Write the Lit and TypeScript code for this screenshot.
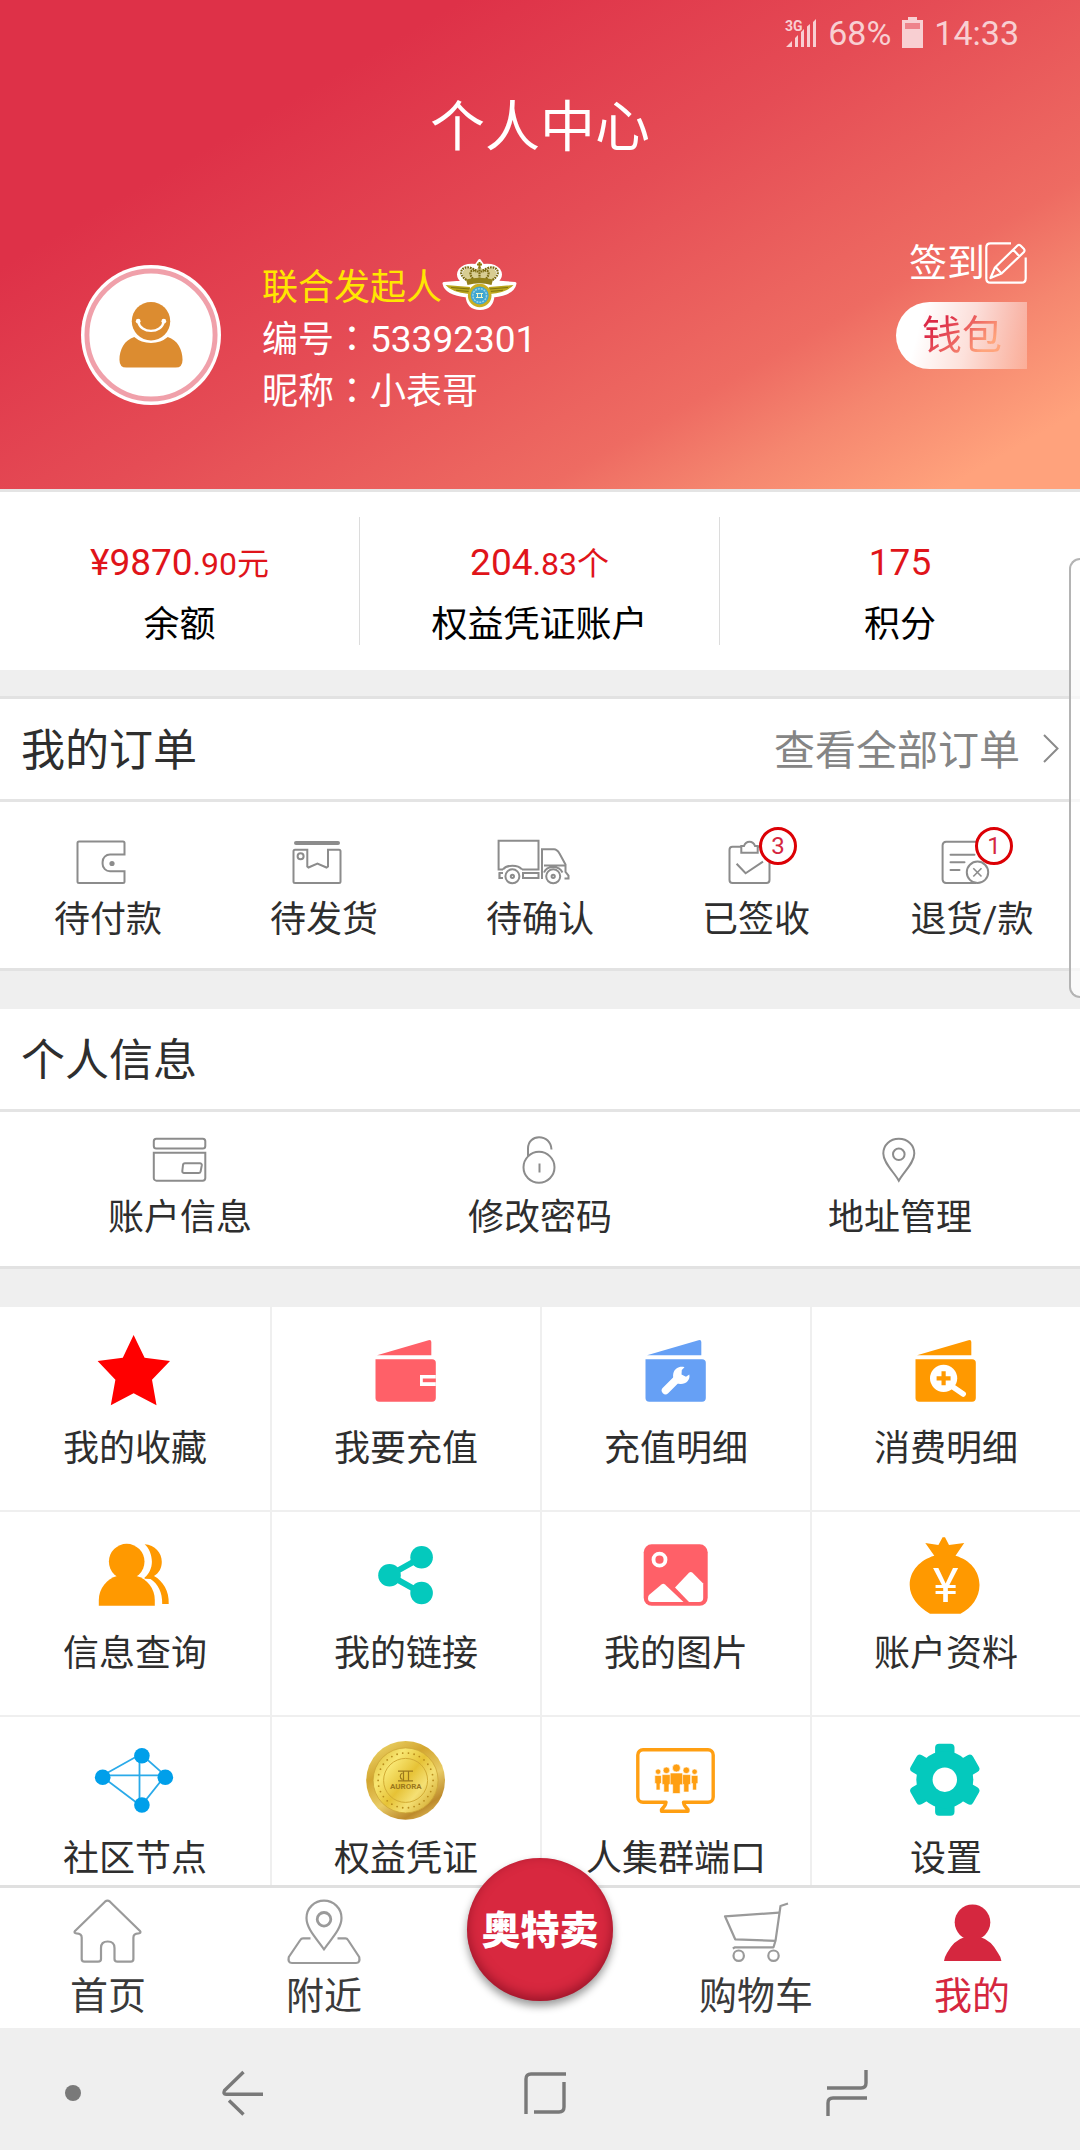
import { LitElement, html, svg, css, nothing, type TemplateResult } from "lit";
import { customElement, property, state } from "lit/decorators.js";
import { classMap } from "lit/directives/class-map.js";

const sharedStyles = css`
  * {
    box-sizing: border-box;
  }
  a,
  button {
    font: inherit;
    color: inherit;
    text-decoration: none;
    background: none;
    border: 0;
    padding: 0;
    margin: 0;
    cursor: pointer;
  }
  svg {
    display: block;
    overflow: visible;
  }
`;

/* ---------- line icons for orders and personal info (80 x 48) ---------- */

const lineIcons: Record<string, TemplateResult> = {
  pay: svg`
    <path d="M56.5 16.5V5a1.5 1.5 0 0 0-1.5-1.500H11A1.500 1.500 0 0 0 9.500 5v38.500A1.500 1.500 0 0 0 11 45h44a1.500 1.500 0 0 0 1.500-1.500V33.300H42a7.400 7.400 0 0 1-7.400-7.400v-2A7.400 7.400 0 0 1 42 16.500Z"/>
    <circle cx="44" cy="25.500" r="2.600" fill="#8c8c8c" stroke="none"/>`,
  ship: svg`
    <path d="M12 5H54" stroke-width="4" stroke-linecap="round"/>
    <path d="M11 11.700H23.300V28.500L24.500 29.500L33.400 25.500L42.500 29.500L44 28.500V11.700H55a1.500 1.500 0 0 1 1.500 1.500V43.500A1.500 1.500 0 0 1 55 45H11A1.500 1.500 0 0 1 9.500 43.500V13.200A1.500 1.500 0 0 1 11 11.700Z"/>
    <circle cx="16.600" cy="18.300" r="3"/>`,
  confirm: svg`
    <path d="M3 31.500H-1.400V2.800H38.500V31.500H22"/>
    <path d="M3 31.500C6.500 26.500 18 26.500 22 31.500"/>
    <path d="M-1.400 35H3M-1.400 40H3M-0.500 34.500V41" stroke-width="2.200"/>
    <rect x="23" y="35" width="15.500" height="5"/>
    <path d="M42 41V11.300H54C57 11.300 58 13 59.500 15.500L65.500 26.500V34L68.500 37.500V40.500H64.500"/>
    <path d="M44 27.500H65.500M44 34.500C47 27 59 27 62.500 34.500"/>
    <circle cx="12.400" cy="38.300" r="7"/>
    <circle cx="12.400" cy="38.300" r="1.600"/>
    <circle cx="53.200" cy="38.300" r="7"/>
    <circle cx="53.200" cy="38.300" r="1.600"/>`,
  signed: svg`
    <path d="M25 8.700H16.500A3 3 0 0 0 13.500 11.700V42A3 3 0 0 0 16.500 45H50.500A3 3 0 0 0 53.500 42V11.700A3 3 0 0 0 50.500 8.700H42"/>
    <path d="M25.300 14.800V8H28C30 2.200 37 2.200 39 8H41.700V14.800Z"/>
    <path d="M20.600 25.700L29.600 35.300L47 23.700"/>`,
  refund: svg`
    <path d="M50 22V6.700A3 3 0 0 0 47 3.700H14A3.500 3.500 0 0 0 10.600 7.200V41.500A3.500 3.500 0 0 0 14 45H44"/>
    <path d="M18.500 16.700H42.500M18.500 24.300H32.500M18.500 32H27.500" stroke-linecap="round"/>
    <circle cx="45.500" cy="34.300" r="10.700" fill="#fff"/>
    <path d="M41.300 30.300L49.500 38.500M49.500 30.300L41.300 38.500" stroke-width="1.600"/>`,
  account: svg`
    <rect x="13.800" y="2.800" width="51.500" height="9.800" rx="2.500"/>
    <path d="M13.800 16.800H65.300V42A2.700 2.700 0 0 1 62.600 44.700H16.500A2.700 2.700 0 0 1 13.800 42Z"/>
    <path d="M45 27.200H60A1.800 1.800 0 0 1 61.800 29.200L60.600 35.500A2 2 0 0 1 58.600 37H44A1.800 1.800 0 0 1 42.300 35L43 29A2 2 0 0 1 45 27.200Z"/>`,
  password: svg`
    <circle cx="39" cy="31.300" r="15.500"/>
    <path d="M28 20.500V12.500C28 5.500 33.200 1.300 39 1.300C46 1.300 51 6 51.500 13.500"/>
    <path d="M39.500 27.500V36.500"/>`,
  address: svg`
    <path d="M38.800 44.700C34 36 23.300 27 23.300 17.500C23.300 9 30 2.800 38.800 2.800S54.300 9 54.300 17.500C54.300 27 43.500 36 38.800 44.700Z"/>
    <circle cx="38.800" cy="18.300" r="5.800"/>`,
};

/* ---------- coloured service icons (80 x 80) ---------- */

const folder = (color: string) => svg`
  <path d="M11 24.300L62.500 9.200Q65.300 8.500 65.300 11V24.300Z" fill=${color}/>
  <path d="M9.500 28.300H66Q69.800 28.300 69.800 32V67Q69.800 70.700 66 70.700H13.300Q9.500 70.700 9.500 67Z" fill=${color}/>`;

const coinDots = Array.from({ length: 30 }, (_, i) => {
  const a = (i * Math.PI) / 15;
  return svg`<circle cx=${39.6 + 27.5 * Math.cos(a)} cy=${39.4 + 27.5 * Math.sin(a)} r="0.9" fill="#b98c1c"/>`;
});

const crowd = [
  { x: 22.1, y: 30.7, r: 2.7, w: 6.6, b: 49 },
  { x: 58.6, y: 30.7, r: 2.7, w: 6.6, b: 49 },
  { x: 30.4, y: 29.3, r: 3.3, w: 8.6, b: 51 },
  { x: 50.3, y: 29.3, r: 3.3, w: 8.6, b: 51 },
  { x: 40.4, y: 27, r: 4, w: 12.4, b: 52.5 },
];

const serviceIcons: Record<string, TemplateResult> = {
  favorite: svg`<path fill="#ff0000" d="M38.600 4L49.600 26.700L75 30L57 48.700L61.500 74.300L38.600 62.300L15.800 74.300L20.400 48.700L2.600 30L27.800 26.700Z"/>`,
  recharge: svg`
    ${folder("#ff6068")}
    <path d="M69.800 44H54V55H69.800" fill="#fff"/>
    <rect x="56.800" y="47.500" width="13" height="3.700" fill="#ff6068"/>`,
  rechargeLog: svg`
    ${folder("#66a0f5")}
    <path d="M29.500 59.500L42 47" stroke="#fff" stroke-width="7.500" stroke-linecap="round"/>
    <path fill="#fff" d="M48.500 36.200C44 34.800 38.500 37 37.300 42.500C36.200 48 39 52.600 44.500 53C50 53.200 54.500 49 53.300 43.500L50 45.800L45.500 43.500L45.800 39Z"/>`,
  spendLog: svg`
    ${folder("#ff9900")}
    <circle cx="37.600" cy="47.300" r="13.600" fill="#fff"/>
    <path d="M47 56L57.200 63" stroke="#fff" stroke-width="5.500" stroke-linecap="round"/>
    <path d="M37.600 40.300V54.300M30.600 47.300H44.600" stroke="#ff9900" stroke-width="4.200"/>`,
  inquiry: svg`
    <g fill="#ff9900">
      <circle cx="31.700" cy="25.600" r="17.800"/>
      <path d="M3.800 69.700V64C3.800 52.500 12 42.500 22 40H41.500C52 42.500 59.800 52.500 59.800 64V69.700Z"/>
      <path d="M49.600 8.300C60 9 66.800 17 66.800 25.700C66.800 32 64 37 59 40C68 45 74.300 55 73.700 68H67.200C67.500 56 63 48 55.500 43L49.600 42.700V41.500C54 38 56.900 32 56.900 25.700C56.900 19 54 12 49.600 8.300Z"/>
    </g>`,
  link: svg`
    <g fill="#04c9bd">
      <path d="M55.500 21.300L23.500 39.200L55.500 57.200" fill="none" stroke="#04c9bd" stroke-width="6"/>
      <circle cx="23.500" cy="39.200" r="11.300"/>
      <circle cx="55.600" cy="21.300" r="11.300"/>
      <circle cx="55.600" cy="57" r="11.300"/>
    </g>`,
  picture: svg`
    <rect x="7.700" y="8.300" width="64" height="61.500" rx="8" fill="#ff6068"/>
    <circle cx="23.500" cy="23.700" r="6" fill="none" stroke="#fff" stroke-width="3.800"/>
    <path fill="#fff" d="M13 59L25.500 48.500Q27.300 47 29 48.500L47.500 66H16Q12 66 12 62.500Q12 60 13 59Z"/>
    <path fill="#fff" d="M39 51.500L53 36.800Q54.800 35.200 56.500 36.800L67.200 47.500V62Q67.200 66 63 66H53Z"/>`,
  profile: svg`
    <path fill="#ff9900" d="M19.300 7L32.400 9L36.600 1.300H39L43 9L58.200 7L49.500 19.800C64 24 73.500 35 73.500 49C73.500 61 66 72 54.500 77.700H24C12 71 3.700 61 3.700 49C3.700 35 14 24 28.300 19.800Z"/>
    <text x="39.500" y="66" text-anchor="middle" font-family="Roboto, sans-serif" font-size="49" fill="#fff">¥</text>`,
  nodes: svg`
    <path d="M7.600 34.300H70.300M44.500 14.700V64M7.600 34.500L46 13L70.300 34.500L46 65L7.600 36" fill="none" stroke="#2aaae9" stroke-width="1.800"/>
    <g fill="#009fea">
      <circle cx="7.700" cy="36.300" r="7.800"/>
      <circle cx="46.900" cy="14.700" r="7.800"/>
      <circle cx="70.300" cy="36.300" r="7.800"/>
      <circle cx="46.900" cy="64" r="7.800"/>
    </g>`,
  voucher: svg`
    <defs>
      <linearGradient id="rim" x1="0.200" y1="0" x2="0.800" y2="1">
        <stop offset="0" stop-color="#ecd468"/><stop offset="0.300" stop-color="#d3a630"/>
        <stop offset="0.600" stop-color="#e9cc66"/><stop offset="0.850" stop-color="#bd8a2c"/>
        <stop offset="1" stop-color="#e2bf5c"/>
      </linearGradient>
      <linearGradient id="face" x1="0" y1="0" x2="1" y2="0.800">
        <stop offset="0" stop-color="#d9b228"/><stop offset="0.300" stop-color="#f8e672"/>
        <stop offset="0.550" stop-color="#e6c236"/><stop offset="0.750" stop-color="#f5e074"/>
        <stop offset="1" stop-color="#d3aa32"/>
      </linearGradient>
    </defs>
    <circle cx="39.600" cy="39.400" r="39.400" fill="url(#rim)"/>
    <circle cx="39.600" cy="39.400" r="32.500" fill="url(#face)" stroke="#cda636" stroke-width="0.800"/>
    ${coinDots}
    <circle cx="39.600" cy="39.400" r="22" fill="none" stroke="#d2ab34" stroke-width="1"/>
    <path d="M32 30.200H47M32 39.800H47M36.500 32C33.500 33 33.500 37.500 36.500 38.500M42.500 30.500V39.500M37.500 30.500V39.500" fill="none" stroke="#9c781c" stroke-width="1.200"/>
    <text x="39.800" y="48" text-anchor="middle" font-family="Roboto, sans-serif" font-size="8" font-weight="700" fill="#9c781c">AURORA</text>`,
  crowd: svg`
    <path d="M30 61.300H7A5.200 5.200 0 0 1 1.800 56.100V14A5.200 5.200 0 0 1 7 8.800H72A5.200 5.200 0 0 1 77.200 14V56.100A5.200 5.200 0 0 1 72 61.300H47.500Q48 65 52 68.500V70.300H25.500V68.500Q29.500 65 30 61.300Z" fill="none" stroke="#ff9f12" stroke-width="3.400" stroke-linejoin="round"/>
    ${crowd.map(
      (p) => svg`
        <g fill="#ff9f12" stroke="#fff" stroke-width="0.600">
          <path d=${`M${p.x - p.w / 2} ${p.y + p.r + 1}h${p.w}v${(p.b - p.y) / 2 - 1}h-${p.w / 5}V${p.b}h-${p.w * 0.6}V${(p.b + p.y) / 2 + p.r}h-${p.w / 5}Z`}/>
          <circle cx=${p.x} cy=${p.y} r=${p.r}/>
        </g>`,
    )}`,
  settings: svg`
    <g fill="#04c9bd">
      ${[0, 60, 120].map((a) => svg`<rect x="29.100" y="2.700" width="19.400" height="72" rx="4" transform=${`rotate(${a} 38.8 38.7)`}/>`)}
      <circle cx="38.800" cy="38.700" r="28.500"/>
    </g>
    <circle cx="38.800" cy="38.700" r="12.200" fill="#fff"/>`,
};

/* ---------- tab bar icons (80 x 72) ---------- */

const tabIcons: Record<string, TemplateResult> = {
  home: svg`<path d="M37 5.700Q39.500 3.500 42 5.700L72 35Q73.500 37 70.500 37.300Q65.400 37.500 65.400 41.500V63Q65.400 65.700 62.700 65.700H49.500Q46.500 65.700 46.500 63V52Q46.500 45.500 39.700 45.500T33 52V63Q33 65.700 30 65.700H16.500Q13.700 65.700 13.700 63V41.500Q13.700 37.500 8.500 37.300Q5.500 37 7 35Z"/>`,
  nearby: svg`
    <path d="M40 53.500C34 44 22.500 33.500 22.500 22C22.500 12 30.500 4.700 40 4.700S57.500 12 57.500 22C57.500 33.500 46 44 40 53.500Z"/>
    <circle cx="40" cy="23.300" r="6.800" stroke-width="2.800"/>
    <path d="M26.500 42.300H19Q17.300 42.300 16.300 44L4.800 61Q3.500 67 8 67H72Q76.500 67 75.200 61L64 44Q63 42.300 61.500 42.300H53.500"/>`,
  cart: svg`
    <path d="M72 7.500L64.500 10L59.500 44.800L57.500 51.300H19L16.800 52.500"/>
    <path d="M63 16.700L9 20.300L19.200 43.300L59.500 44.800"/>
    <circle cx="22.700" cy="59.700" r="5.200"/>
    <circle cx="57.500" cy="59.700" r="5.200"/>`,
  mine: svg`
    <g fill="#d5273f" stroke="none">
      <circle cx="40.500" cy="26.300" r="17.800"/>
      <path d="M12 65Q12.500 61 15 57Q22 44 33 41H48Q59 44 66 57Q69 61 69.400 65Z"/>
    </g>`,
};

interface Entry {
  icon: string;
  label: string;
  count?: number;
}

@customElement("line-item")
export class LineItem extends LitElement {
  @property() icon = "";
  @property() label = "";
  @property({ type: Number }) count = 0;

  static styles = [
    sharedStyles,
    css`
      :host {
        display: block;
      }
      .item {
        display: flex;
        flex-direction: column;
        align-items: center;
        gap: 10px;
      }
      .icon {
        position: relative;
      }
      .badge {
        position: absolute;
        left: 43px;
        top: -11px;
        width: 38px;
        height: 38px;
        border: 3px solid #dc0005;
        border-radius: 50%;
        background: #fff;
        color: #d5273f;
        font-size: 24px;
        line-height: 33px;
        text-align: center;
      }
      .label {
        font-size: 36px;
        line-height: 48px;
      }
    `,
  ];

  render() {
    return html`
      <a class="item" href="#">
        <span class="icon">
          <svg width="80" height="48" viewBox="0 0 80 48" fill="none" stroke="#8c8c8c" stroke-width="2" aria-hidden="true">
            ${lineIcons[this.icon]}
          </svg>
          ${this.count ? html`<span class="badge">${this.count}</span>` : nothing}
        </span>
        <span class="label">${this.label}</span>
      </a>
    `;
  }
}

@customElement("service-item")
export class ServiceItem extends LitElement {
  @property() icon = "";
  @property() label = "";

  static styles = [
    sharedStyles,
    css`
      :host {
        display: block;
        box-sizing: border-box;
        background: #fff;
      }
      .item {
        display: flex;
        flex-direction: column;
        align-items: center;
        gap: 14px;
        padding: 24px 0 37px;
      }
      .label {
        font-size: 36px;
        line-height: 48px;
        white-space: nowrap;
      }
    `,
  ];

  render() {
    return html`
      <a class="item" href="#">
        <svg width="80" height="80" viewBox="0 0 80 80" aria-hidden="true">${serviceIcons[this.icon]}</svg>
        <span class="label">${this.label}</span>
      </a>
    `;
  }
}

@customElement("profile-header")
export class ProfileHeader extends LitElement {
  static styles = [
    sharedStyles,
    css`
      :host {
        display: block;
        color: #fff;
        background: linear-gradient(150deg, #de3148 24%, #e54c55 49%, #ee6b62 72%, #f5866f 81%, #ffa27c 93%);
        border-bottom: 3px solid #e4e4e4;
      }
      .status {
        display: flex;
        justify-content: flex-end;
        align-items: center;
        gap: 11px;
        padding: 9px 61px 0 0;
        font-size: 34px;
        line-height: 48px;
        color: #f8cfd2;
      }
      .title {
        margin: 0;
        padding: 32px 0 24px;
        font-size: 55px;
        line-height: 76px;
        font-weight: 400;
        text-align: center;
      }
      .profile {
        display: flex;
        align-items: flex-start;
        padding: 50px 53px 71px 81px;
      }
      .avatar {
        flex: none;
        width: 140px;
        height: 140px;
        margin-top: 26px;
      }
      .details {
        flex: 1;
        margin: 23px 0 0 41px;
        font-size: 36px;
        line-height: 52px;
      }
      .rank {
        display: flex;
        align-items: center;
        color: #ffe600;
      }
      .emblem {
        margin: -4px 0 4px;
      }
      .colon {
        font-family: "Noto Sans CJK JP", sans-serif;
        line-height: 1;
      }
      .digits {
        font-size: 37px;
        line-height: 1;
      }
      .actions {
        display: flex;
        flex-direction: column;
        align-items: flex-end;
        gap: 15px;
      }
      .checkin {
        display: flex;
        align-items: center;
        font-size: 38px;
        line-height: 48px;
      }
      .wallet {
        padding: 0 25px 0 26px;
        border-radius: 34px 0 0 34px;
        background: linear-gradient(105deg, #fff 20%, rgba(255, 255, 255, 0.75) 55%, rgba(255, 255, 255, 0.25));
        font-size: 40px;
        line-height: 67px;
      }
      .wallet-text {
        background: linear-gradient(135deg, #dc2a47 22%, #ffa47c 78%);
        background-clip: text;
        -webkit-background-clip: text;
        color: transparent;
      }
    `,
  ];

  render() {
    return html`
      <div class="status">
        <svg width="32" height="30" viewBox="0 0 32 30" fill="#f8cfd2" aria-hidden="true">
          <text x="0" y="13" font-family="Roboto, sans-serif" font-size="14" font-weight="700">3G</text>
          <path d="M1 29L7 23V29ZM10 20L13 17V29H10ZM16 14L19 11V29H16ZM22 8.500L25 6V29H22ZM28 4L31 1V29H28Z" />
        </svg>
        <span>68%</span>
        <svg width="21" height="32" viewBox="0 0 21 32" aria-hidden="true">
          <path d="M6 0H15V3H21V31H0V3H6Z" fill="#f8cfd2" />
          <rect x="3" y="6" width="15" height="6" fill="#ee838b" />
        </svg>
        <span>14:33</span>
      </div>
      <h1 class="title">个人中心</h1>
      <div class="profile">
        <svg class="avatar" viewBox="0 0 142 142" role="img" aria-label="头像">
          <circle cx="71" cy="71" r="71" fill="#fff" />
          <circle cx="71" cy="71" r="65" fill="none" stroke="#f0a0aa" stroke-width="5" />
          <g fill="#dc8c30">
            <circle cx="71" cy="57" r="19.500" />
            <path d="M54 73Q61 79 71 79T88 73C98 76 103 86 103 96Q103 104 96 104H46Q39 104 39 96C39 86 44 76 54 73Z" />
          </g>
          <g fill="none" stroke="#fff" stroke-width="2.400" stroke-linecap="round">
            <path d="M58 57C60 70 82 70 84 57" />
          </g>
          <circle cx="58" cy="57" r="2.400" fill="#fff" />
          <circle cx="84" cy="57" r="2.400" fill="#fff" />
        </svg>
        <div class="details">
          <div class="rank">
            <span>联合发起人</span>
            <svg class="emblem" width="75" height="51" viewBox="0 0 75 51" aria-hidden="true">
              <path
                d="M37.500 1.500L41 6.500Q52 5 57 11Q61 17 54 23L73 24.500Q71 35 51 37Q50 49.500 38 49.500T25 37Q4 35 2 24.500L21 23Q14 17 18 11Q23 5 34 6.500Z"
                fill="#fff" stroke="#fff" stroke-width="3" stroke-linejoin="round"
              />
              <path d="M3.500 26L28 28L27 35Q9 33 3.500 26ZM71.500 26L47 28L48 35Q66 33 71.500 26Z" fill="#bba51c" />
              <path d="M9 28.500L28 30M14 31.300L27 32.500M66 28.500L47 30M61 31.300L48 32.500" stroke="#80730f" stroke-width="1" />
              <path d="M24 21C16 12 24 6 33 11L37.500 8L42 11C51 6 59 12 51 21Q37.500 18 24 21Z" fill="#d8cd92" />
              <path
                d="M24.500 21C14 14 21 6 29 9Q33 10.500 36 13M50.500 21C61 14 54 6 46 9Q42 10.500 39 13M31 20C26 14 29 9.500 34 12.500M44 20C49 14 46 9.500 41 12.500M37.500 8V20"
                fill="none" stroke="#7c6a12" stroke-width="2.200" stroke-dasharray="1.800 0.800"
              />
              <path d="M37.500 3V9M35 5.500H40" stroke="#8d7a10" stroke-width="2" />
              <path d="M24 20.500Q37.500 17 51 20.500L49.500 26Q37.500 22.500 25.500 26Z" fill="#94811a" />
              <circle cx="37.700" cy="36.500" r="11.800" fill="#c9ae22" />
              <circle cx="37.700" cy="36.500" r="9" fill="#3fa6d2" />
              <circle cx="37.700" cy="36.500" r="6.800" fill="none" stroke="#98d3e6" stroke-width="1.500" stroke-dasharray="2 1" />
              <path d="M34 34.500H41M34 38.500H41M35.500 34.500V38.500M39.500 34.500V38.500" stroke="#eef6c9" stroke-width="1" />
            </svg>
          </div>
          <div>编号<span class="colon">：</span><span class="digits">53392301</span></div>
          <div>昵称<span class="colon">：</span>小表哥</div>
        </div>
        <div class="actions">
          <button class="checkin">
            <span>签到</span>
            <svg width="42" height="42" viewBox="0 0 42 42" fill="none" stroke="#fff" stroke-width="2.200" aria-hidden="true">
              <path d="M26 1.300H5.500Q1.300 1.300 1.300 5.500V36.500Q1.300 40.700 5.500 40.700H36.500Q40.700 40.700 40.700 36.500V15.500" />
              <path d="M5.500 36L10 25.500L32.500 3.500Q34 2.300 35.500 3.500L39 7Q40 8.500 39 10L16.500 31.500ZM28.500 8L34.500 14.500M11 25.500L16.500 31.500" stroke-linejoin="round" />
            </svg>
          </button>
          <button class="wallet"><span class="wallet-text">钱包</span></button>
        </div>
      </div>
    `;
  }
}

@customElement("app-root")
export class AppRoot extends LitElement {
  @state() private activeTab = "mine";

  private readonly balances = [
    { main: "¥9870", rest: ".90元", label: "余额" },
    { main: "204", rest: ".83个", label: "权益凭证账户" },
    { main: "175", rest: "", label: "积分" },
  ];

  private readonly orders: Entry[] = [
    { icon: "pay", label: "待付款" },
    { icon: "ship", label: "待发货" },
    { icon: "confirm", label: "待确认" },
    { icon: "signed", label: "已签收", count: 3 },
    { icon: "refund", label: "退货/款", count: 1 },
  ];

  private readonly personal: Entry[] = [
    { icon: "account", label: "账户信息" },
    { icon: "password", label: "修改密码" },
    { icon: "address", label: "地址管理" },
  ];

  private readonly services: Entry[] = [
    { icon: "favorite", label: "我的收藏" },
    { icon: "recharge", label: "我要充值" },
    { icon: "rechargeLog", label: "充值明细" },
    { icon: "spendLog", label: "消费明细" },
    { icon: "inquiry", label: "信息查询" },
    { icon: "link", label: "我的链接" },
    { icon: "picture", label: "我的图片" },
    { icon: "profile", label: "账户资料" },
    { icon: "nodes", label: "社区节点" },
    { icon: "voucher", label: "权益凭证" },
    { icon: "crowd", label: "人集群端口" },
    { icon: "settings", label: "设置" },
  ];

  static styles = [
    sharedStyles,
    css`
      :host {
        position: relative;
        display: flex;
        flex-direction: column;
        height: 100vh;
        overflow: hidden;
        background: #efefef;
        color: #2e2e2e;
        font-family: Roboto, "Noto Sans CJK SC", sans-serif;
      }
      .content {
        flex: 1;
        min-height: 0;
        overflow-y: auto;
        scrollbar-width: none;
      }
      .balances {
        display: grid;
        grid-template-columns: repeat(3, 1fr);
        padding: 25px 0;
        margin-bottom: 26px;
        background: #fff;
      }
      .balance {
        display: flex;
        flex-direction: column;
        align-items: center;
        gap: 18px;
        padding-top: 22px;
        border-right: 1px solid #dcdcdc;
      }
      .balance:last-child {
        border-right: 0;
      }
      .amount {
        font-size: 37px;
        line-height: 48px;
        color: #e0141a;
      }
      .fraction {
        font-size: 32px;
        line-height: 1;
      }
      .balance-label {
        font-size: 36px;
        line-height: 40px;
        color: #000;
      }
      .section {
        margin-bottom: 38px;
        background: #fff;
        border-bottom: 3px solid #e2e2e2;
      }
      .orders {
        border-top: 3px solid #e2e2e2;
      }
      .section-head {
        display: flex;
        justify-content: space-between;
        align-items: center;
        padding: 4px 21px 0;
        line-height: 96px;
        border-bottom: 3px solid #e4e4e4;
      }
      .section-title {
        margin: 0;
        font-size: 44px;
        font-weight: 400;
      }
      .more {
        display: flex;
        align-items: center;
        gap: 23px;
        font-size: 41px;
        color: #858585;
      }
      .row {
        display: flex;
        padding: 24px 0;
      }
      .orders .row {
        padding-top: 36px;
      }
      .row-item {
        flex: 1;
      }
      .services {
        display: grid;
        grid-template-columns: repeat(4, 1fr);
        row-gap: 2px;
      }
      .service:not(:nth-child(4n + 1)) {
        border-left: 2px solid #efefef;
      }
      .tabbar {
        display: grid;
        grid-template-columns: repeat(5, 1fr);
        background: #fff;
        border-top: 3px solid #e0e0e0;
        font-size: 38px;
        line-height: 48px;
        color: #3a3a3a;
      }
      .tab {
        display: flex;
        flex-direction: column;
        align-items: center;
        gap: 4px;
        padding: 8px 0;
      }
      .active {
        color: #d5273f;
      }
      .sale-slot {
        position: relative;
        display: grid;
        justify-content: center;
      }
      .sale {
        position: absolute;
        top: -30px;
        justify-self: center;
        width: 146px;
        height: 143px;
        padding-top: 2px;
        border-radius: 50%;
        background: #d8283f;
        box-shadow: inset 0 -4px 12px rgba(90, 0, 20, 0.5), 0 5px 8px rgba(0, 0, 0, 0.4);
        color: #fff;
        font-size: 39px;
        font-weight: 900;
      }
      .navbar {
        display: grid;
        grid-template-columns: 92fr 302fr 302fr 302fr 82fr;
        justify-items: center;
        align-items: center;
        padding: 41px 0 33px;
      }
      .nav-dot {
        justify-self: end;
        margin-right: 11px;
      }
      .edge-handle {
        position: absolute;
        right: 0;
        top: 558px;
        width: 11px;
        height: 440px;
        border: 2px solid #b4b4b4;
        border-right: 0;
        border-radius: 16px 0 0 16px;
        background: rgba(255, 255, 255, 0.7);
      }
    `,
  ];

  private tab(id: string, label: string) {
    return html`
      <a
        class=${classMap({ tab: true, active: this.activeTab === id })}
        href="#"
        @click=${(e: Event) => {
          e.preventDefault();
          this.activeTab = id;
        }}
      >
        <svg width="80" height="72" viewBox="0 0 80 72" fill="none" stroke="#9a9a9a" stroke-width="2.2" stroke-linejoin="round" aria-hidden="true">
          ${tabIcons[id]}
        </svg>
        <span>${label}</span>
      </a>
    `;
  }

  private items(entries: Entry[]) {
    return html`<div class="row">
      ${entries.map(
        (o) => html`<line-item class="row-item" .icon=${o.icon} .label=${o.label} .count=${o.count ?? 0}></line-item>`,
      )}
    </div>`;
  }

  render() {
    return html`
      <main class="content">
        <profile-header></profile-header>

        <section class="balances">
          ${this.balances.map(
            (b) => html`
              <div class="balance">
                <span class="amount">${b.main}<span class="fraction">${b.rest}</span></span>
                <span class="balance-label">${b.label}</span>
              </div>
            `,
          )}
        </section>

        <section class="section orders">
          <div class="section-head">
            <h2 class="section-title">我的订单</h2>
            <a class="more" href="#">
              <span>查看全部订单</span>
              <svg width="16" height="28" viewBox="0 0 16 28" fill="none" stroke="#8a8a8a" stroke-width="2" aria-hidden="true">
                <path d="M1 -2L14.500 11.500L1 25" />
              </svg>
            </a>
          </div>
          ${this.items(this.orders)}
        </section>

        <section class="section">
          <div class="section-head">
            <h2 class="section-title">个人信息</h2>
          </div>
          ${this.items(this.personal)}
        </section>

        <section class="services">
          ${this.services.map(
            (s) => html`<service-item class="service" .icon=${s.icon} .label=${s.label}></service-item>`,
          )}
        </section>
      </main>

      <nav class="tabbar">
        ${this.tab("home", "首页")} ${this.tab("nearby", "附近")}
        <div class="sale-slot"><button class="sale">奥特卖</button></div>
        ${this.tab("cart", "购物车")} ${this.tab("mine", "我的")}
      </nav>

      <div class="navbar">
        <button class="nav-dot" aria-label="隐藏导航栏">
          <svg width="16" height="16" viewBox="0 0 16 16"><circle cx="8" cy="8" r="8" fill="#797979" /></svg>
        </button>
        <button aria-label="返回">
          <svg width="42" height="48" viewBox="0 0 42 48" fill="none" stroke="#797979" stroke-width="3.400">
            <path d="M21.500 3L2.500 21.500Q1 25.300 4 25.300H41M7 31.500L21.500 45.500" />
          </svg>
        </button>
        <button aria-label="主屏幕">
          <svg width="42" height="48" viewBox="0 0 42 48" fill="none" stroke="#797979" stroke-width="3.400">
            <path d="M2 45V10Q2 5 7 5H42M40 13V38Q40 43 35 43H10" />
          </svg>
        </button>
        <button aria-label="最近任务">
          <svg width="42" height="48" viewBox="0 0 42 48" fill="none" stroke="#797979" stroke-width="3.400">
            <path d="M40 1V14Q40 19 35 19H1M2 47V34Q2 29 7 29H41" />
          </svg>
        </button>
      </div>

      <div class="edge-handle"></div>
    `;
  }
}
